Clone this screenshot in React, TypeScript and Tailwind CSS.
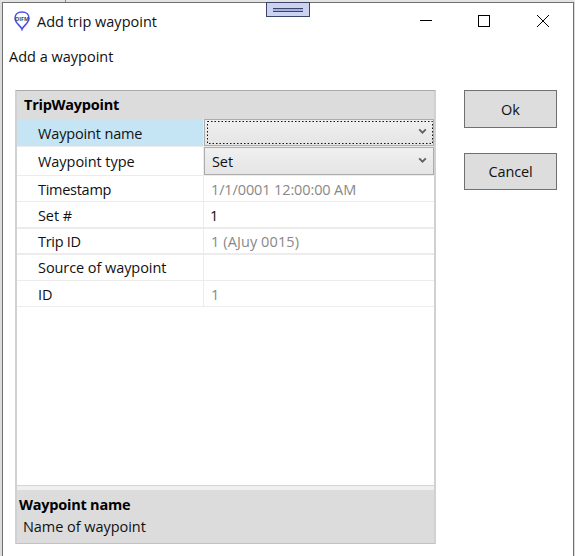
import type { ReactNode } from "react";

type RowProps = {
  label: string;
  labelClass: string;
  rowClass: string;
  selected?: boolean;
  children?: ReactNode;
};

function Row({ label, labelClass, rowClass, selected, children }: RowProps) {
  return (
    <div className={`flex shrink-0 border-[#ececec] ${rowClass}`}>
      <div
        className={`flex w-[187px] shrink-0 items-center border-r border-[#ececec] pl-[21px] ${
          selected ? "bg-[#c5e5f5]" : ""
        }`}
      >
        <span className={`leading-5 ${labelClass}`}>{label}</span>
      </div>
      <div className="flex min-w-0 flex-1 items-center leading-5">{children}</div>
    </div>
  );
}

function Combo({ text, focused }: { text?: string; focused?: boolean }) {
  return (
    <div className="relative flex h-full w-[230px] items-center justify-between border border-[#acacac] bg-linear-to-b from-[#f0f0f0] to-[#e5e5e5] pr-[6px] pl-[7px]">
      <span className="pt-[2px] leading-5 tracking-[-0.1px]">{text}</span>
      <svg width="9" height="7" viewBox="0 0 9 7" fill="none" className="mb-[2px]">
        <path d="M1.2 1.3 4.5 4.7 7.8 1.3" stroke="#606060" strokeWidth="1.8" />
      </svg>
      {focused && (
        <svg className="absolute top-[1px] left-[2px]" width="226" height="23" fill="none">
          <rect x=".5" y=".5" width="225" height="22" stroke="#111" strokeDasharray="1.5 2" />
        </svg>
      )}
    </div>
  );
}

export default function App() {
  return (
    <div className="flex h-[556px] w-[575px] flex-col overflow-hidden bg-[#dcdcdc] font-['Open_Sans','Noto_Sans',sans-serif] text-[14.5px] whitespace-nowrap text-[#111]">
      <div className="flex h-[2px] shrink-0 bg-[#e3e3e3] pl-[65px]">
        <div className="w-px bg-[#888]" />
      </div>
      <div className="relative ml-[2px] flex w-[572px] flex-1 flex-col border-x border-t border-[#707070] bg-white">
        <div className="absolute top-[-1px] left-[263px] flex h-[15px] w-[44px] items-center justify-center border border-[#3b4569] bg-[#cbd3f1]">
          <div className="h-1 w-[30px] border-y border-[#3b4569] bg-[#a5b3dc]" />
        </div>

        <header className="flex h-[36px] shrink-0 items-center pl-[11px]">
          <svg width="16" height="20" viewBox="0 0 16 20" className="mt-[-1px]">
            <path
              d="M8 18.3C7 15 1 12.2 1 7.2 1 3.3 4 1 8 1s7 2.3 7 6.2c0 5-6 7.8-7 11.1Z"
              fill="#fff"
              stroke="#4a4ae6"
              strokeWidth="1.5"
            />
            <text x="1" y="9.8" fontSize="6" fontWeight="700" fill="#444" textLength="14" lengthAdjust="spacingAndGlyphs">
              OIFM
            </text>
          </svg>
          <span className="ml-[7px] pt-[2px] leading-5">Add trip waypoint</span>
          <svg width="130" height="12" viewBox="0 0 130 12" fill="none" stroke="#000" className="mt-[-1px] ml-auto mr-[23px]" shapeRendering="crispEdges">
            <path d="M0 5.5h12" />
            <path d="M58.5.5h11v11h-11z" />
            <path d="M117 0l12 12M129 0l-12 12" shapeRendering="auto" />
          </svg>
        </header>

        <p className="ml-[6px] h-[51px] shrink-0 pt-2 leading-5">Add a waypoint</p>

        <main className="flex pl-[12px]">
          <section className="flex h-[454px] w-[421px] flex-col border-x-2 border-y border-x-[#cfd1d3] border-t-[#a9a9a9] border-b-[#c0c2c4] bg-white">
            <h2 className="h-[28px] shrink-0 bg-[#dcdcdc] pt-[4px] pl-[7px] leading-5 font-bold tracking-[-0.25px] text-black">
              TripWaypoint
            </h2>
            <Row label="Waypoint name" labelClass="pt-[2px] tracking-[-0.15px]" rowClass="h-[28px] border-b" selected>
              <Combo focused />
            </Row>
            <Row label="Waypoint type" labelClass="pt-[2px] tracking-[-0.05px]" rowClass="h-[29px] border-b">
              <Combo text="Set" />
            </Row>
            <Row label="Timestamp" labelClass="pt-[2px] tracking-[-0.28px]" rowClass="h-[26px] border-b">
              <span className="pt-[2px] pl-[7px] tracking-[-0.12px] text-[#888]">1/1/0001 12:00:00 AM</span>
            </Row>
            <Row label="Set #" labelClass="pt-[2px] tracking-[-0.1px]" rowClass="h-[27px] border-b-2">
              <span className="pt-[2px] pl-[6px]">1</span>
            </Row>
            <Row label="Trip ID" labelClass="pt-[2px] tracking-[-0.3px]" rowClass="h-[26px] border-b-2">
              <span className="pt-[2px] pl-[7px] tracking-[0.1px] text-[#888]">1 (AJuy 0015)</span>
            </Row>
            <Row label="Source of waypoint" labelClass="tracking-[-0.07px]" rowClass="h-[26px] border-b" />
            <Row label="ID" labelClass="pt-[2px] tracking-[-0.1px]" rowClass="h-[26px] border-b">
              <span className="pt-[2px] pl-[7px] text-[#888]">1</span>
            </Row>
            <div className="flex-1" />
            <div className="h-[5px] shrink-0 border-t border-[#d4d4d4] bg-[#f0f0f0]" />
            <footer className="h-[53px] shrink-0 bg-[#dcdcdc] pt-[4px]">
              <h3 className="pl-[2px] leading-[22px] font-bold tracking-[-0.23px] text-black">Waypoint name</h3>
              <p className="pl-[6px] leading-[22px] tracking-[-0.05px]">Name of waypoint</p>
            </footer>
          </section>

          <div className="ml-[28px] flex flex-col gap-[25px]">
            <button className="h-[38px] w-[93px] border border-[#707070] bg-[#dddddd] pt-[2px]">Ok</button>
            <button className="h-[37px] w-[93px] border border-[#707070] bg-[#dddddd] tracking-[-0.15px]">Cancel</button>
          </div>
        </main>
      </div>
    </div>
  );
}
